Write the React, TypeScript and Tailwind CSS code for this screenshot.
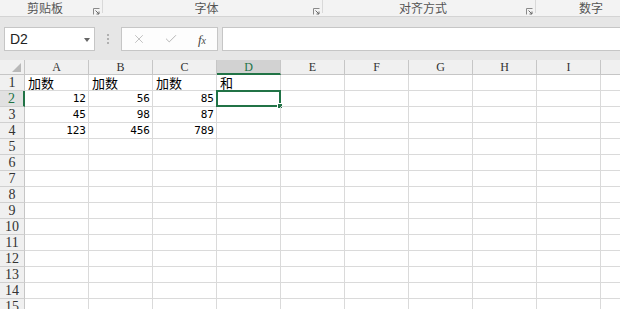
import { X, Check } from "lucide-react";

const cols = ["A", "B", "C", "D", "E", "F", "G", "H", "I", "J"];
const data: Record<number, (string | number)[]> = {
  1: ["加数", "加数", "加数", "和"],
  2: [12, 56, 85],
  3: [45, 98, 87],
  4: [123, 456, 789],
};

function Launcher() {
  return (
    <svg width="7" height="7" viewBox="0 0 7 7" className="mt-[8px]">
      <path d="M0.5 6.5V0.5H6.5" fill="none" stroke="#8a8a8a" strokeWidth="1" />
      <path d="M2.5 2.5L6 6M6 3.5V6H3.5" fill="none" stroke="#6a6a6a" strokeWidth="1" />
    </svg>
  );
}

function Group({ label, w, last }: { label: string; w: number; last?: boolean }) {
  return (
    <div className="flex items-start shrink-0">
      <div style={{ width: w }} className="text-center text-[12px] leading-[15px] text-[#555]">
        {label}
      </div>
      {!last && (
        <>
          <div className="w-[12px] flex justify-center">
            <Launcher />
          </div>
          <div className="w-px h-[13px] bg-[#d9d9d9]" />
        </>
      )}
    </div>
  );
}

export default function App() {
  return (
    <div className="w-[620px] h-[309px] overflow-hidden bg-[#e6e6e6] font-['Noto_Sans_CJK_SC',sans-serif]">
      {/* ribbon group labels */}
      <div className="h-[17px] bg-[#f3f3f3] border-b border-[#d4d4d4] flex">
        <Group label="剪贴板" w={90} />
        <Group label="字体" w={207} />
        <Group label="对齐方式" w={200} />
        <Group label="数字" w={110} last />
      </div>

      {/* formula bar */}
      <div className="flex items-center h-[24px] mt-[10px] pl-[4px]">
        <div className="w-[91px] h-[24px] bg-white border border-[#c6c6c6] flex items-center justify-between pl-[5px] pr-[4px]">
          <span className="font-['Liberation_Sans',sans-serif] text-[14px] text-[#222]">D2</span>
          <div className="w-0 h-0 border-l-[3.5px] border-r-[3.5px] border-t-[4px] border-l-transparent border-r-transparent border-t-[#666] mt-[1px]" />
        </div>
        <div className="w-[26px] flex flex-col items-center gap-[2px]">
          <div className="w-[2px] h-[2px] bg-[#b0b0b0]" />
          <div className="w-[2px] h-[2px] bg-[#b0b0b0]" />
          <div className="w-[2px] h-[2px] bg-[#b0b0b0]" />
        </div>
        <div className="w-[97px] h-[24px] bg-[#fdfdfd] border border-[#c6c6c6] flex items-center">
          <div className="w-[32px] flex justify-center ml-[1px]">
            <X size={14} strokeWidth={1.3} color="#b0b0b0" />
          </div>
          <div className="w-[32px] flex justify-center">
            <Check size={14} strokeWidth={1.6} color="#b0b0b0" />
          </div>
          <div className="w-[30px] flex justify-center">
            <span className="font-['Liberation_Serif',serif] italic text-[13px] text-[#444] leading-none">
              f<span className="text-[10px]">x</span>
            </span>
          </div>
        </div>
        <div className="flex-1 h-[24px] ml-[4px] bg-white border border-[#c6c6c6] border-r-0" />
      </div>

      {/* sheet */}
      <div className="mt-[9px] bg-white">
        {/* column headers */}
        <div className="flex h-[15px]">
          <div className="w-[25px] shrink-0 bg-[#f0f0f0] border-r border-b border-[#c6c6c6] relative">
            <svg className="absolute right-[3px] bottom-[2px]" width="9" height="9" viewBox="0 0 9 9">
              <path d="M9 0V9H0Z" fill="#b8b8b8" />
            </svg>
          </div>
          {cols.map((c) => {
            const sel = c === "D";
            return (
              <div
                key={c}
                className={`w-[64px] shrink-0 border-r border-[#c6c6c6] flex items-center justify-center font-['Liberation_Serif',serif] text-[12px] leading-none ${
                  sel
                    ? "bg-[#d2d2d2] text-[#217346] border-b-2 border-b-[#217346]"
                    : "bg-[#f0f0f0] text-[#333] border-b border-b-[#c6c6c6]"
                }`}
              >
                {c}
              </div>
            );
          })}
        </div>

        {/* rows */}
        {Array.from({ length: 15 }, (_, i) => i + 1).map((r) => {
          const rowSel = r === 2;
          const vals = data[r] || [];
          return (
            <div key={r} className="flex h-[16px]">
              <div
                className={`w-[25px] shrink-0 border-b border-[#d0d0d0] flex items-center justify-center font-['Liberation_Serif',serif] text-[14px] leading-none ${
                  rowSel
                    ? "bg-[#e1e1e1] text-[#217346] border-r-2 border-r-[#217346]"
                    : "bg-[#f0f0f0] text-[#333] border-r border-r-[#c6c6c6]"
                }`}
              >
                {r}
              </div>
              {cols.map((c, ci) => {
                const v = vals[ci];
                const isNum = typeof v === "number";
                const sel = rowSel && c === "D";
                return (
                  <div
                    key={c}
                    className={`w-[64px] shrink-0 border-r border-b border-[#dadada] relative flex items-end text-black ${
                      isNum ? "justify-end pr-[2px]" : "justify-start pl-[3px]"
                    }`}
                  >
                    {v !== undefined &&
                      (isNum ? (
                        <span className="font-['DejaVu_Sans_Mono',monospace] text-[11px] leading-[14px]">{v}</span>
                      ) : (
                        <span className="text-[13px] leading-[15px]">{v}</span>
                      ))}
                    {sel && (
                      <div className="absolute left-[-1px] top-[-1px] right-[-1px] bottom-[-1px] border-2 border-[#217346]">
                        <div className="absolute right-[-4px] bottom-[-4px] w-[6px] h-[6px] bg-[#217346] border border-white" />
                      </div>
                    )}
                  </div>
                );
              })}
            </div>
          );
        })}
      </div>
    </div>
  );
}
